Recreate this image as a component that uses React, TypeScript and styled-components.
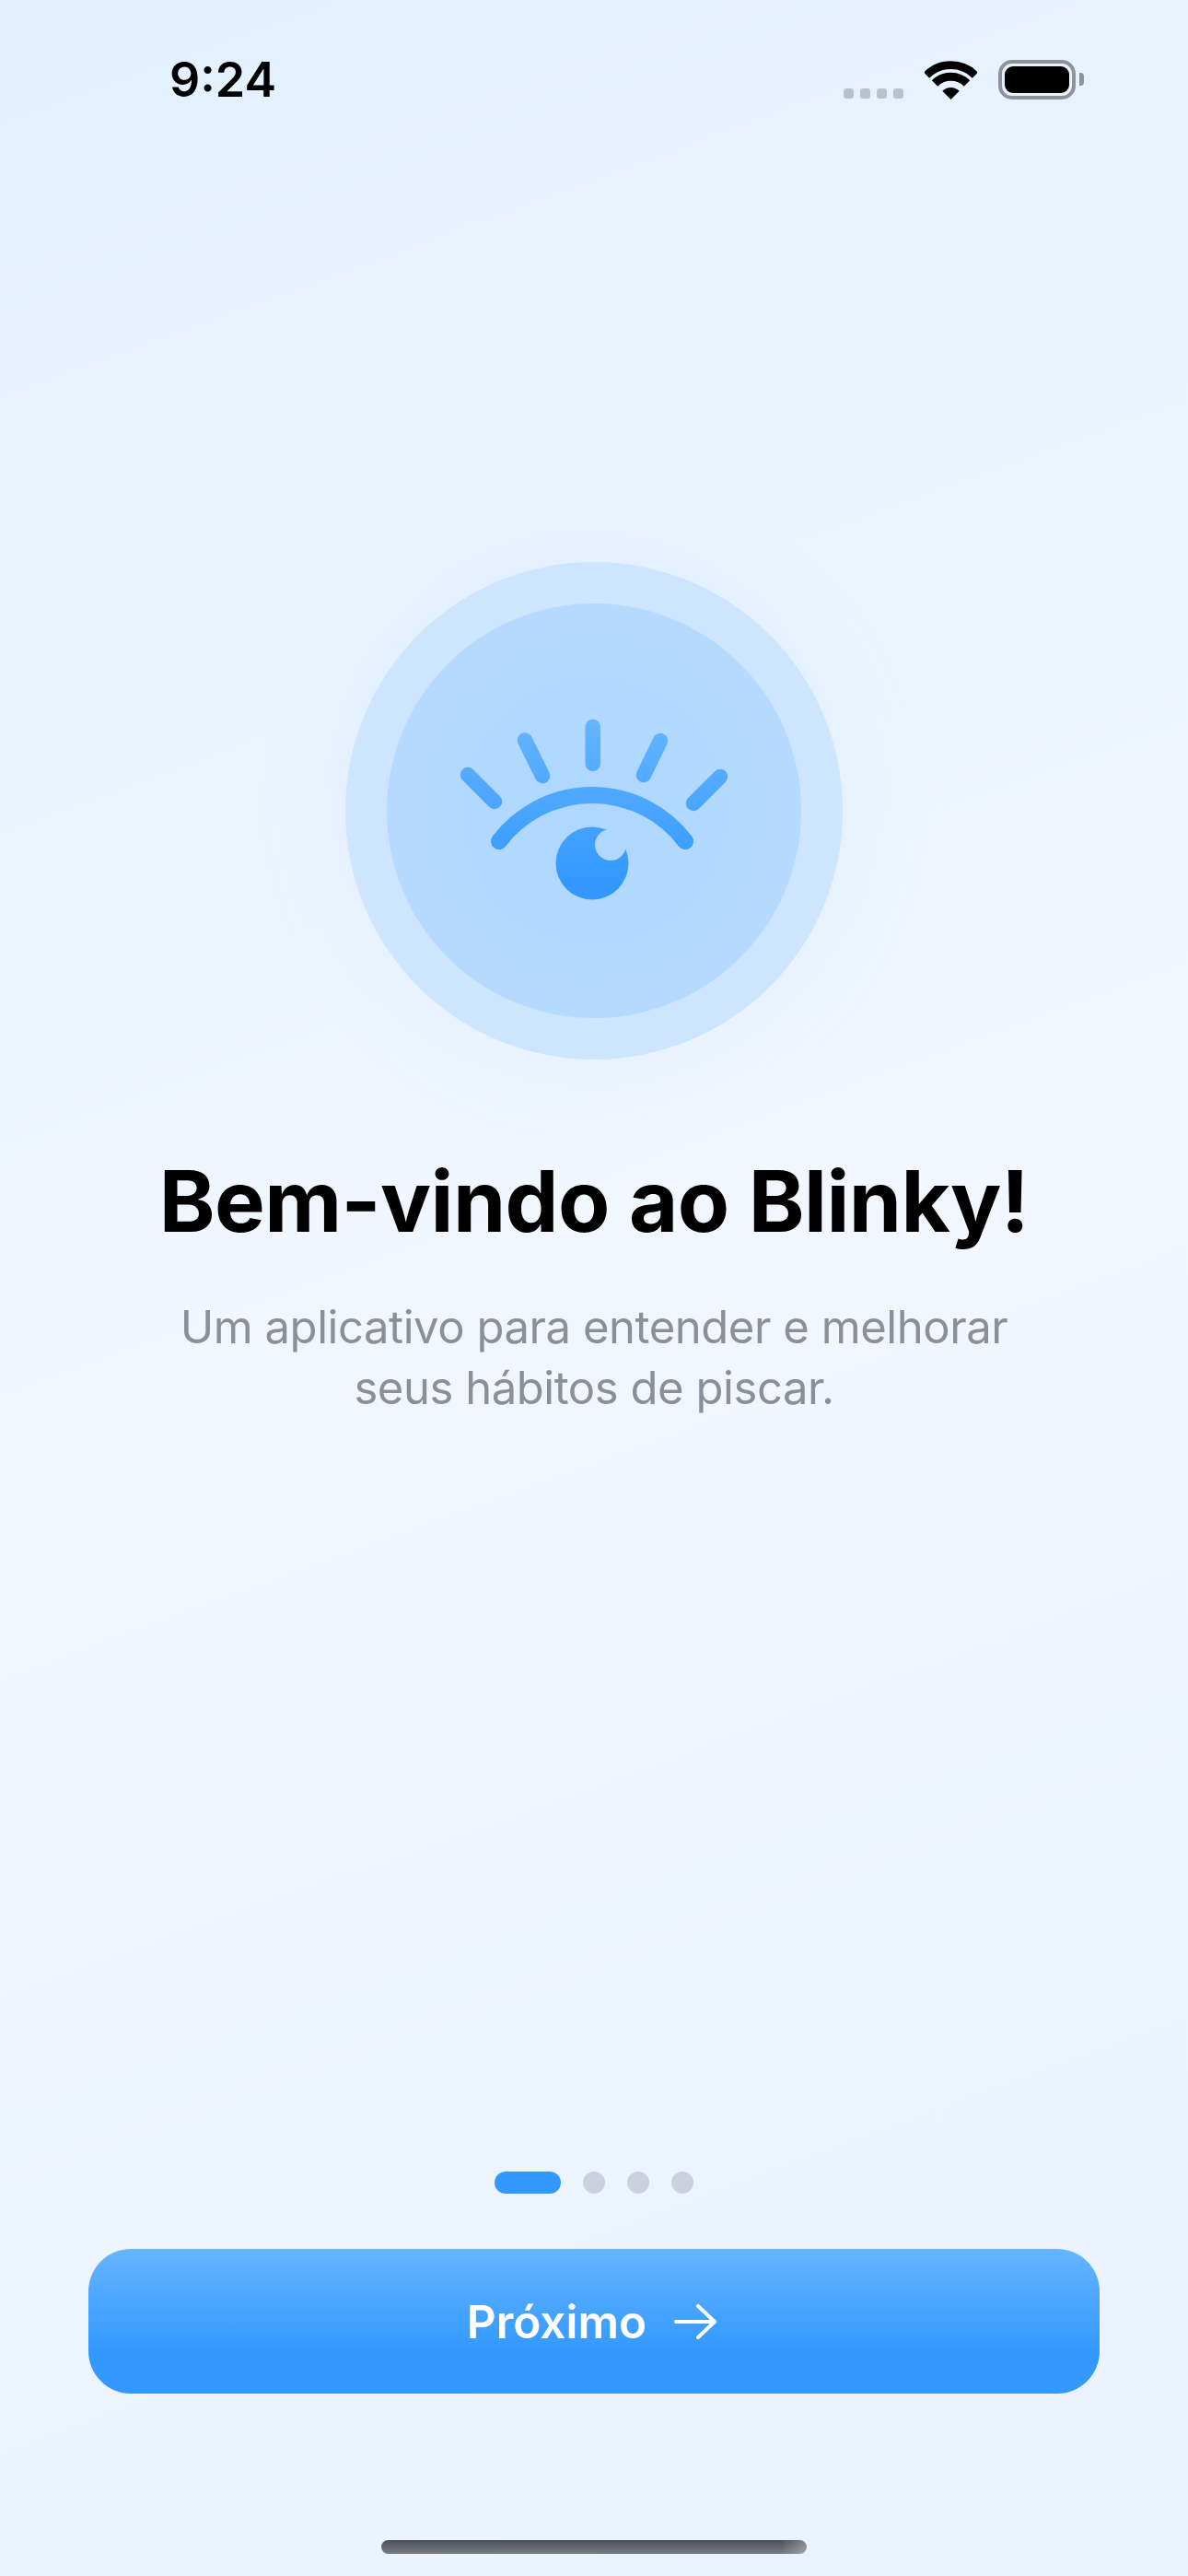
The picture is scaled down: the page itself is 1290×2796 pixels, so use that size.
import React from 'react';
import styled, { createGlobalStyle } from 'styled-components';

const GlobalStyle = createGlobalStyle`
  html, body {
    margin: 0;
    padding: 0;
  }
  body {
    font-family: Inter, "Liberation Sans", sans-serif;
  }
`;

const Screen = styled.div`
  width: 1290px;
  height: 2796px;
  display: flex;
  flex-direction: column;
  align-items: center;
  overflow: hidden;
  background: linear-gradient(160deg, #e2f0ff 0%, #f2f7ff 50%, #e8f2ff 100%);
`;

const StatusBar = styled.div`
  width: 100%;
  height: 130px;
  box-sizing: border-box;
  padding: 65px 113px 0 184px;
  display: flex;
  justify-content: space-between;
  align-items: flex-start;
`;

const Time = styled.span`
  font-size: 52px;
  line-height: 44px;
  font-weight: 600;
  color: #000;
`;

const StatusIcons = styled.div`
  display: flex;
  align-items: flex-end;
`;

const Signal = styled.div`
  display: flex;
  gap: 7px;
  margin-right: 23px;
  margin-bottom: 1px;
`;

const SignalDot = styled.span`
  width: 11px;
  height: 11px;
  border-radius: 3px;
  background: #b9c1cb;
`;

const Battery = styled.div`
  width: 84px;
  height: 43px;
  box-sizing: border-box;
  margin-left: 23px;
  padding: 3px;
  border: 4px solid #8e939a;
  border-radius: 15px;
  display: flex;
`;

const BatteryFill = styled.div`
  flex: 1;
  background: #000;
  border-radius: 9px;
`;

const BatteryCap = styled.div`
  width: 5px;
  height: 14px;
  margin-left: 4px;
  margin-bottom: 15px;
  background: #8e939a;
  border-radius: 0 4px 4px 0;
`;

const OuterCircle = styled.div`
  width: 540px;
  height: 540px;
  margin-top: 480px;
  border-radius: 50%;
  display: flex;
  align-items: center;
  justify-content: center;
  background: #cde5ff;
  box-shadow: 0 0 110px rgba(120, 180, 255, 0.1);
`;

const InnerCircle = styled.div`
  width: 450px;
  height: 450px;
  border-radius: 50%;
  display: flex;
  align-items: center;
  justify-content: center;
  background: radial-gradient(circle, #aed7ff 0%, #b9dbff 100%);
`;

const Title = styled.h1`
  margin: 104px 0 0;
  font-size: 92px;
  line-height: 100px;
  font-weight: 700;
  letter-spacing: -0.6px;
  color: #000;
  white-space: nowrap;
`;

const Subtitle = styled.p`
  margin: 54px 0 0;
  font-size: 49px;
  line-height: 66px;
  font-weight: 400;
  letter-spacing: -0.45px;
  color: #8a8f98;
  text-align: center;
`;

const Footer = styled.div`
  margin-top: auto;
  width: 100%;
  padding-bottom: 24px;
  display: flex;
  flex-direction: column;
  align-items: center;
`;

const Dots = styled.div`
  display: flex;
  gap: 24px;
`;

const Dot = styled.span<{ $active?: boolean }>`
  width: ${(p) => (p.$active ? '72px' : '24px')};
  height: 24px;
  border-radius: 12px;
  background: ${(p) => (p.$active ? '#3399ff' : '#cbd2dc')};
`;

const NextButton = styled.button`
  width: 1098px;
  height: 157px;
  margin-top: 60px;
  padding: 0 5px 0 0;
  border: none;
  border-radius: 46px;
  display: flex;
  align-items: center;
  justify-content: center;
  gap: 30px;
  background: linear-gradient(180deg, #66b5ff 0%, #3399ff 70%);
  color: #fff;
  font-family: inherit;
  font-size: 49.5px;
  font-weight: 600;
`;

const HomeBar = styled.div`
  width: 462px;
  height: 15px;
  margin-top: 159px;
  border-radius: 8px;
  background: linear-gradient(90deg, transparent 94%, rgba(255, 255, 255, 0.3) 100%),
    linear-gradient(180deg, #4b4f55 0%, #787c84 100%);
`;

const WifiIcon = () => (
  <svg width="57" height="42" viewBox="0 0 57 42" fill="none">
    <path d="M2.1 15.6A37.3 37.3 0 0 1 54.9 15.6" stroke="#000" strokeWidth="8.6" />
    <path d="M11 24.5A24.7 24.7 0 0 1 46 24.5" stroke="#000" strokeWidth="9" />
    <path d="M28.5 42L19.3 32.8A13 13 0 0 1 37.7 32.8Z" fill="#000" />
  </svg>
);

// coordinates are taken from the 450px inner circle
const EyeLogo = () => (
  <svg width="450" height="450" viewBox="0 0 450 450" fill="none">
    <defs>
      <linearGradient id="eyeGrad" gradientUnits="userSpaceOnUse" x1="0" y1="124" x2="0" y2="300">
        <stop offset="0" stopColor="#66b5ff" />
        <stop offset="1" stopColor="#3399ff" />
      </linearGradient>
      <mask id="pupilMask" maskUnits="userSpaceOnUse" x="0" y="0" width="450" height="450">
        <rect width="450" height="450" fill="#fff" />
        <circle cx="243" cy="262" r="17" fill="#000" />
      </mask>
    </defs>
    <g stroke="url(#eyeGrad)" strokeWidth="16.5" strokeLinecap="round">
      <path d="M223.7 134V174" />
      <path d="M150 148.5L169 187" />
      <path d="M297 149L279 186" />
      <path d="M88 186L117 215" />
      <path d="M362 188L333 217" />
      <path d="M122 258A127 127 0 0 1 324 258" strokeWidth="18" />
    </g>
    <circle cx="223" cy="282" r="39.5" fill="url(#eyeGrad)" mask="url(#pupilMask)" />
  </svg>
);

const ArrowIcon = () => (
  <svg width="46" height="38" viewBox="0 0 46 38" fill="none" stroke="#fff" strokeWidth="4" strokeLinecap="round" strokeLinejoin="round">
    <path d="M2 19H44" />
    <path d="M26 2L44 19L26 36" />
  </svg>
);

const App = () => {
  return (
    <Screen>
      <GlobalStyle />
      <StatusBar>
        <Time>9:24</Time>
        <StatusIcons>
          <Signal>
            {[0, 1, 2, 3].map((i) => (
              <SignalDot key={i} />
            ))}
          </Signal>
          <WifiIcon />
          <Battery>
            <BatteryFill />
          </Battery>
          <BatteryCap />
        </StatusIcons>
      </StatusBar>

      <OuterCircle>
        <InnerCircle>
          <EyeLogo />
        </InnerCircle>
      </OuterCircle>

      <Title>Bem-vindo ao Blinky!</Title>
      <Subtitle>
        Um aplicativo para entender e melhorar
        <br />
        seus hábitos de piscar.
      </Subtitle>

      <Footer>
        <Dots>
          <Dot $active />
          <Dot />
          <Dot />
          <Dot />
        </Dots>
        <NextButton>
          Próximo
          <ArrowIcon />
        </NextButton>
        <HomeBar />
      </Footer>
    </Screen>
  );
};

export default App;
